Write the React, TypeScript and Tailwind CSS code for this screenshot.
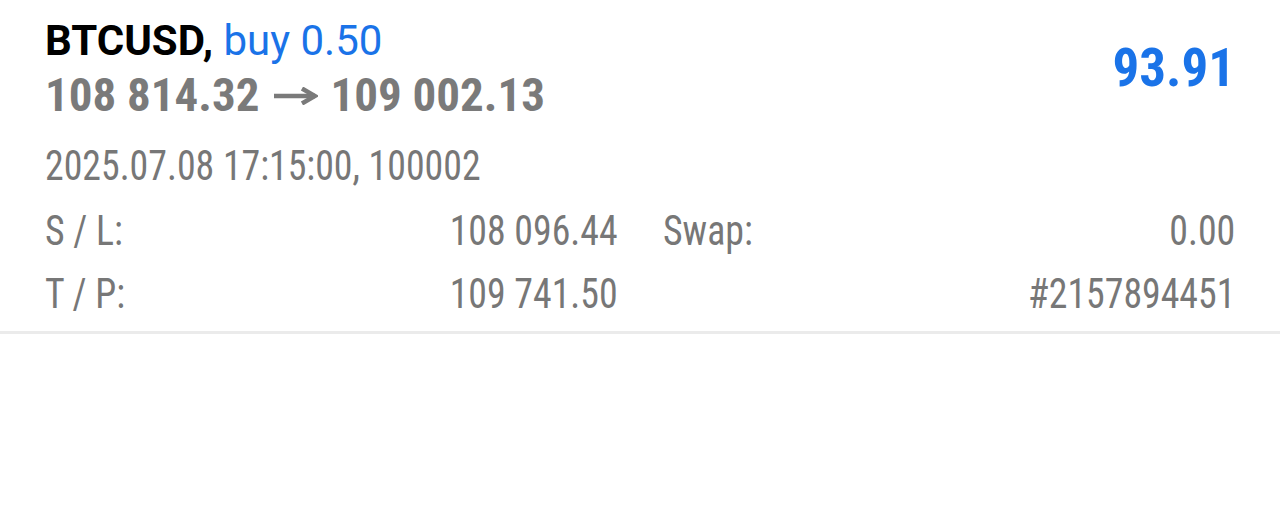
import React from "react";

const FONT = "font-['Roboto','Liberation_Sans',sans-serif]";

function Row({ label, value, label2, value2 }: { label: string; value: string; label2?: string; value2: string }) {
  return (
    <div className="grid grid-cols-2 gap-x-[45px] h-[63px] items-center text-[42px] text-[#777777] font-stretch-[75%]">
      <div className="flex justify-between">
        <span className="inline-block origin-left scale-x-[0.9]">{label}</span>
        <span className="inline-block origin-right scale-x-[0.9]">{value}</span>
      </div>
      <div className="flex justify-between">
        <span className="inline-block origin-left scale-x-[0.9]">{label2 ?? ""}</span>
        <span className="inline-block origin-right scale-x-[0.9]">{value2}</span>
      </div>
    </div>
  );
}

function Arrow() {
  return (
    <svg width="45" height="18" viewBox="0 0 45 18" className="mx-[13px] mt-[2px]" fill="none" stroke="#7a7a7a" strokeWidth="4.5">
      <path d="M1 9H42" />
      <path d="M29 1.5L42 9L29 16.5" strokeLinejoin="miter" />
    </svg>
  );
}

export default function App() {
  return (
    <div className={`w-[1280px] h-[528px] bg-white ${FONT}`}>
      <div className="px-[45px] pt-[16px] pb-[6px] border-b-[3px] border-[#ebebeb]">
        <div className="flex justify-between items-center">
          <div className="flex flex-col">
            <div className="text-[42px] leading-[50px] whitespace-nowrap">
              <span className="font-bold text-black">BTCUSD,</span>{" "}
              <span className="text-[#1a73e8]">buy 0.50</span>
            </div>
            <div className="mt-[4px] text-[47px] leading-[50px] font-bold text-[#7a7a7a] whitespace-nowrap font-stretch-[75%] flex items-center">
              <span>108 814.32</span>
              <Arrow />
              <span>109 002.13</span>
            </div>
          </div>
          <div className="text-[53px] font-bold text-[#1a73e8] leading-none font-stretch-[75%]">93.91</div>
        </div>
        <div className="mt-[22px] text-[42px] leading-[48px] text-[#777777] font-stretch-[75%]">
          <span className="inline-block origin-left scale-x-[0.9] whitespace-nowrap">2025.07.08 17:15:00, 100002</span>
        </div>
        <div className="mt-[9px]">
          <Row label="S / L:" value="108 096.44" label2="Swap:" value2="0.00" />
          <Row label="T / P:" value="109 741.50" value2="#2157894451" />
        </div>
      </div>
    </div>
  );
}
